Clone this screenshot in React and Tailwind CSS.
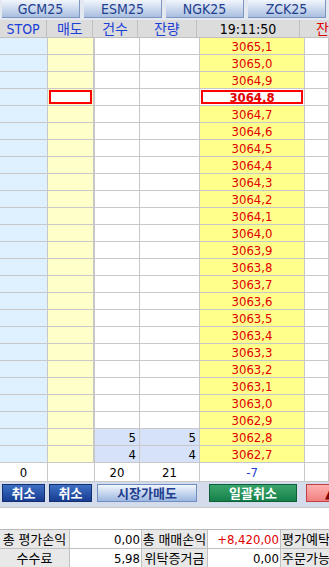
import React from "react";

const tabs = ["GCM25", "ESM25", "NGK25", "ZCK25"];

const prices = [
  "3065,1", "3065,0", "3064,9", "3064,8", "3064,7", "3064,6", "3064,5",
  "3064,4", "3064,3", "3064,2", "3064,1", "3064,0", "3063,9", "3063,8",
  "3063,7", "3063,6", "3063,5", "3063,4", "3063,3", "3063,2", "3063,1",
  "3063,0", "3062,9", "3062,8", "3062,7",
];

const bids = { "3062,8": 5, "3062,7": 4 };

const cell = "h-[17px] border-r border-b border-[#c8c8c8] flex items-center";

const App = () => {
  return (
    <div
      className="w-[329px] h-[567px] overflow-hidden bg-[#d4dceb] text-[13px] leading-none"
      style={{
        fontFamily:
          '"Liberation Sans Narrow", "DejaVu Sans Condensed", "Noto Sans CJK KR", sans-serif',
      }}
    >
      {/* tabs */}
      <div className="flex h-[20px] gap-[4px] pl-[2px] bg-[#e4e8f0]">
        {tabs.map((t) => (
          <div
            key={t}
            className="w-[78px] shrink-0 h-[18px] flex items-center justify-center text-[14px] text-[#1f3f8f] bg-gradient-to-b from-[#f2f6fc] to-[#a9bfdf] border-b border-r border-[#7f97c0]"
          >
            {t}
          </div>
        ))}
      </div>

      {/* header */}
      <div className="flex h-[18px] bg-[#dcdcdc] border-b border-[#c0c0c0] text-[#1c3fd6] text-[14px]">
        <div className="w-[48px] border-r border-[#c0c0c0] flex items-center justify-center">STOP</div>
        <div className="w-[47px] border-r border-[#c0c0c0] flex items-center justify-center">매도</div>
        <div className="w-[45px] border-r border-[#c0c0c0] flex items-center justify-center">건수</div>
        <div className="w-[60px] border-r border-[#c0c0c0] flex items-center justify-center">잔량</div>
        <div className="w-[105px] border-r border-[#c0c0c0] flex items-center justify-center text-black">19:11:50</div>
        <div className="flex-1 flex items-center pl-[16px] text-[#e00000]">잔</div>
      </div>

      {/* rows */}
      {prices.map((p, i) => {
        const cur = i === 3;
        const bid = bids[p];
        return (
          <div key={p} className="flex">
            <div className={`${cell} w-[48px] bg-[#dff1ff]`} />
            <div className={`${cell} w-[47px] bg-[#ffffc9] border-r-2 p-[1px]`}>
              {cur && <div className="w-full h-full border-2 border-[#ff0000] bg-white" />}
            </div>
            <div className={`${cell} w-[45px] justify-end pr-[3px] ${bid ? "bg-[#d6e2fa]" : "bg-white"}`}>
              {bid}
            </div>
            <div className={`${cell} w-[60px] justify-end pr-[3px] ${bid ? "bg-[#d6e2fa]" : "bg-white"}`}>
              {bid}
            </div>
            <div className={`${cell} w-[105px] justify-center text-[#e00000] ${cur ? "bg-white p-[1px]" : "bg-[#ffff8c]"}`}>
              {cur ? (
                <div className="w-full h-full border-2 border-[#ff0000] flex items-center justify-center font-bold">
                  {p}
                </div>
              ) : (
                p
              )}
            </div>
            <div className={`${cell} flex-1 bg-white`} />
          </div>
        );
      })}

      {/* sum row */}
      <div className="flex bg-white">
        <div className={`${cell} w-[48px] justify-center h-[19px]`}>0</div>
        <div className={`${cell} w-[47px] h-[19px]`} />
        <div className={`${cell} w-[45px] justify-center h-[19px]`}>20</div>
        <div className={`${cell} w-[60px] justify-center h-[19px]`}>21</div>
        <div className={`${cell} w-[105px] justify-center text-[#1c3fd6] h-[19px]`}>-7</div>
        <div className={`${cell} flex-1 h-[19px]`} />
      </div>

      {/* buttons */}
      <div className="flex items-start h-[25px] pt-[2px] pl-[2px] bg-[#d4dceb] overflow-hidden">
        <button className="shrink-0 w-[43px] h-[18px] mr-[4px] flex items-center justify-center font-bold text-white bg-gradient-to-b from-[#3e70c4] to-[#173c92] border border-[#12306f]">
          취소
        </button>
        <button className="shrink-0 w-[43px] h-[18px] mr-[5px] flex items-center justify-center font-bold text-white bg-gradient-to-b from-[#3e70c4] to-[#173c92] border border-[#12306f]">
          취소
        </button>
        <button className="shrink-0 w-[100px] h-[18px] mr-[12px] flex items-center justify-center font-bold text-[#1f3f8f] bg-gradient-to-b from-[#f2f6fc] to-[#9db7e0] border border-[#6f8fc2]">
          시장가매도
        </button>
        <button className="shrink-0 w-[88px] h-[18px] mr-[9px] flex items-center justify-center font-bold text-white bg-gradient-to-b from-[#3aa56a] to-[#13804a] border border-[#0e5f36]">
          일괄취소
        </button>
        <button className="shrink-0 w-[40px] h-[18px] flex items-center justify-start pl-[18px] font-bold text-[#800000] bg-gradient-to-b from-[#ffb0b0] to-[#f08080] border border-[#c04040]">
          ▲
        </button>
      </div>

      {/* blank strip */}
      <div className="h-[22px] bg-white border-t border-[#c8c8c8]" />

      {/* footer */}
      <div className="flex h-[19px] border-t border-[#b8b8b8] bg-white">
        <div className="w-[70px] bg-[#e8e8e8] border-r border-[#c0c0c0] flex items-center justify-center whitespace-nowrap overflow-hidden">총 평가손익</div>
        <div className="w-[72px] border-r border-[#c0c0c0] flex items-center justify-end pr-[1px]">0,00</div>
        <div className="w-[66px] bg-[#e8e8e8] border-r border-[#c0c0c0] flex items-center justify-center whitespace-nowrap overflow-hidden">총 매매손익</div>
        <div className="w-[73px] border-r border-[#c0c0c0] flex items-center justify-end pr-[1px] text-[#e00000]">+8,420,00</div>
        <div className="flex-1 bg-[#e8e8e8] flex items-center pl-[1px] whitespace-nowrap overflow-hidden">평가예탁</div>
      </div>
      <div className="flex h-[19px] border-t border-[#c0c0c0] bg-white">
        <div className="w-[70px] bg-[#e8e8e8] border-r border-[#c0c0c0] flex items-center justify-center">수수료</div>
        <div className="w-[72px] border-r border-[#c0c0c0] flex items-center justify-end pr-[1px]">5,98</div>
        <div className="w-[66px] bg-[#e8e8e8] border-r border-[#c0c0c0] flex items-center justify-center whitespace-nowrap overflow-hidden">위탁증거금</div>
        <div className="w-[73px] border-r border-[#c0c0c0] flex items-center justify-end pr-[1px]">0,00</div>
        <div className="flex-1 bg-[#e8e8e8] flex items-center pl-[1px] whitespace-nowrap overflow-hidden">주문가능</div>
      </div>
    </div>
  );
};

export default App;
